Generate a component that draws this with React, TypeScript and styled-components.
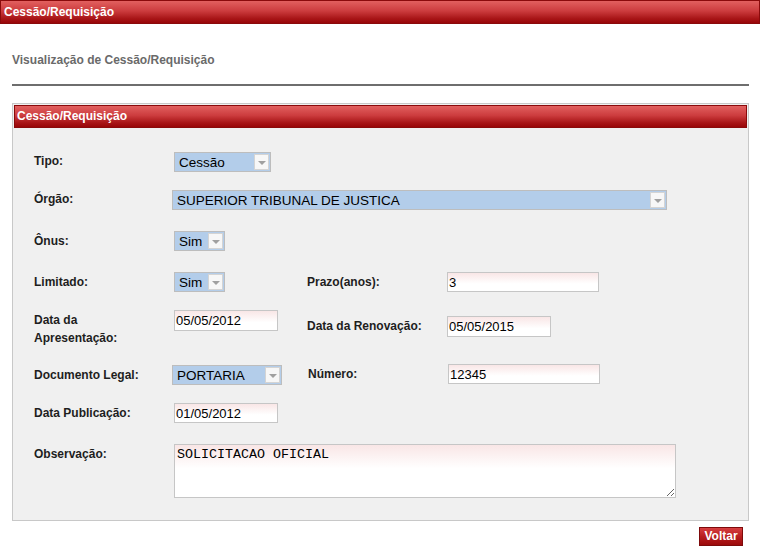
import React from 'react';
import styled, { createGlobalStyle } from 'styled-components';

const GlobalStyle = createGlobalStyle`
  html, body { margin: 0; padding: 0; background: #ffffff; }
  body { font-family: "Liberation Sans", Arial, sans-serif; }
`;

const redGradient = 'linear-gradient(to bottom, #e2605f 0%, #cc3c3e 45%, #a81517 80%, #980608 100%)';

const Page = styled.div`
  width: 761px;
  height: 554px;
  overflow: hidden;
  position: relative;
`;

const TopBar = styled.div`
  width: 760px;
  height: 24px;
  box-sizing: border-box;
  border: 1px solid #8a0a0b;
  background: ${redGradient};
  color: #ffffff;
  font: bold 12px/22px "Liberation Sans", Arial, sans-serif;
  padding-left: 3px;
`;

const Content = styled.div`
  padding: 0 12px;
`;

const Subtitle = styled.div`
  margin-top: 29px;
  font: bold 12px/14px "Liberation Sans", Arial, sans-serif;
  color: #6a6a6a;
`;

const Rule = styled.div`
  margin-top: 17px;
  width: 737px;
  height: 2px;
  background: #6e6e6e;
`;

const Panel = styled.div`
  margin-top: 17px;
  width: 737px;
  height: 418px;
  box-sizing: border-box;
  border: 1px solid #c8c8c8;
  background: #f0f0f0;
  padding: 1px;
`;

const PanelHeader = styled.div`
  height: 23px;
  box-sizing: border-box;
  border: 1px solid #8a0a0b;
  background: ${redGradient};
  color: #ffffff;
  font: bold 12px/21px "Liberation Sans", Arial, sans-serif;
  padding-left: 2px;
`;

const Form = styled.div`
  padding: 24px 0 0 20px;
`;

const Row = styled.div<{ $h: number }>`
  display: grid;
  grid-template-columns: 138px 135px 140px 1fr;
  align-items: start;
  height: ${(p) => p.$h}px;
`;

const Cell = styled.div<{ $top?: number; $left?: number; $span?: number }>`
  padding-top: ${(p) => p.$top ?? 0}px;
  padding-left: ${(p) => p.$left ?? 0}px;
  grid-column: ${(p) => (p.$span ? `span ${p.$span}` : 'auto')};
`;

const Label = styled.div<{ $lh?: number }>`
  font: bold 12px "Liberation Sans", Arial, sans-serif;
  line-height: ${(p) => p.$lh ?? 17}px;
  color: #1e1e1e;
  white-space: nowrap;
`;

const SelectBox = styled.div<{ $w: number; $h?: number }>`
  width: ${(p) => p.$w}px;
  height: ${(p) => p.$h ?? 20}px;
  box-sizing: border-box;
  border: 1px solid #bdbdbd;
  background: #b3cdea;
  display: flex;
  align-items: stretch;
`;

const SelectText = styled.div`
  flex: 1;
  padding-left: 4px;
  font: 13.5px "Liberation Sans", Arial, sans-serif;
  color: #000000;
  display: flex;
  align-items: center;
  white-space: nowrap;
  overflow: hidden;
`;

const ArrowBox = styled.div`
  width: 15px;
  margin: 1px;
  box-sizing: border-box;
  border: 1px solid #d4d4d4;
  background: #f7f7f7;
  display: flex;
  align-items: center;
  justify-content: center;
`;

const Arrow = styled.div`
  width: 0;
  height: 0;
  border-left: 4px solid transparent;
  border-right: 4px solid transparent;
  border-top: 4px solid #a0a0a0;
  margin-top: 1px;
`;

const TextInput = styled.input<{ $w: number; $h?: number }>`
  display: block;
  width: ${(p) => p.$w}px;
  height: ${(p) => p.$h ?? 20}px;
  box-sizing: border-box;
  margin: 0;
  border: 1px solid #c6c6c6;
  padding: 0 1px;
  background: linear-gradient(to bottom, #f9e6e6 0%, #ffffff 60%);
  font: 13px "Liberation Sans", Arial, sans-serif;
  color: #000000;
  outline: none;
`;

const TextArea = styled.textarea`
  display: block;
  width: 502px;
  height: 54px;
  box-sizing: border-box;
  margin: 0;
  border: 1px solid #c6c6c6;
  padding: 2px 2px;
  background: linear-gradient(to bottom, #f9e6e6 0%, #ffffff 45%);
  font: 13.33px/15px "Liberation Mono", "Courier New", monospace;
  color: #000000;
  outline: none;
`;

const Footer = styled.div`
  display: flex;
  justify-content: flex-end;
  padding: 6px 18px 0 0;
`;

const Button = styled.button`
  width: 44px;
  height: 19px;
  box-sizing: border-box;
  border: 1px solid #7e0a0b;
  background: linear-gradient(to bottom, #d63e40 0%, #b81e20 50%, #9c0a0b 100%);
  color: #ffffff;
  font: bold 12px "Liberation Sans", Arial, sans-serif;
  padding: 0;
  line-height: 17px;
  cursor: pointer;
`;

const Select: React.FC<{ w: number; h?: number; value: string }> = ({ w, h, value }) => (
  <SelectBox $w={w} $h={h}>
    <SelectText>{value}</SelectText>
    <ArrowBox>
      <Arrow />
    </ArrowBox>
  </SelectBox>
);

export default function App() {
  return (
    <Page>
      <GlobalStyle />
      <TopBar>Cessão/Requisição</TopBar>
      <Content>
        <Subtitle>Visualização de Cessão/Requisição</Subtitle>
        <Rule />
        <Panel>
          <PanelHeader>Cessão/Requisição</PanelHeader>
          <Form>
            <Row $h={38}>
              <Cell $top={1}><Label>Tipo:</Label></Cell>
              <Cell $left={2} $span={3}><Select w={97} h={20} value="Cessão" /></Cell>
            </Row>
            <Row $h={41}>
              <Cell $top={1}><Label>Órgão:</Label></Cell>
              <Cell $span={3}><Select w={495} value="SUPERIOR TRIBUNAL DE JUSTICA" /></Cell>
            </Row>
            <Row $h={41}>
              <Cell $top={2}><Label>Ônus:</Label></Cell>
              <Cell $left={2} $span={3}><Select w={51} value="Sim" /></Cell>
            </Row>
            <Row $h={38}>
              <Cell $top={2}><Label>Limitado:</Label></Cell>
              <Cell $left={2}><Select w={51} value="Sim" /></Cell>
              <Cell $top={2}><Label>Prazo(anos):</Label></Cell>
              <Cell><TextInput $w={152} readOnly value="3" /></Cell>
            </Row>
            <Row $h={54}>
              <Cell $top={1}><Label $lh={18}>Data da<br />Apresentação:</Label></Cell>
              <Cell $left={2}><TextInput $w={104} $h={21} readOnly value="05/05/2012" /></Cell>
              <Cell $top={8}><Label>Data da Renovação:</Label></Cell>
              <Cell $top={6}><TextInput $w={104} $h={21} readOnly value="05/05/2015" /></Cell>
            </Row>
            <Row $h={39}>
              <Cell $top={3}><Label>Documento Legal:</Label></Cell>
              <Cell $top={1}><Select w={110} value="PORTARIA" /></Cell>
              <Cell $top={2} $left={1}><Label>Número:</Label></Cell>
              <Cell $left={1}><TextInput $w={152} readOnly value="12345" /></Cell>
            </Row>
            <Row $h={41}>
              <Cell $top={2}><Label>Data Publicação:</Label></Cell>
              <Cell $left={2}><TextInput $w={104} readOnly value="01/05/2012" /></Cell>
            </Row>
            <Row $h={60}>
              <Cell $top={2}><Label>Observação:</Label></Cell>
              <Cell $left={2} $span={3}><TextArea readOnly value="SOLICITACAO OFICIAL" /></Cell>
            </Row>
          </Form>
        </Panel>
      </Content>
      <Footer>
        <Button>Voltar</Button>
      </Footer>
    </Page>
  );
}
